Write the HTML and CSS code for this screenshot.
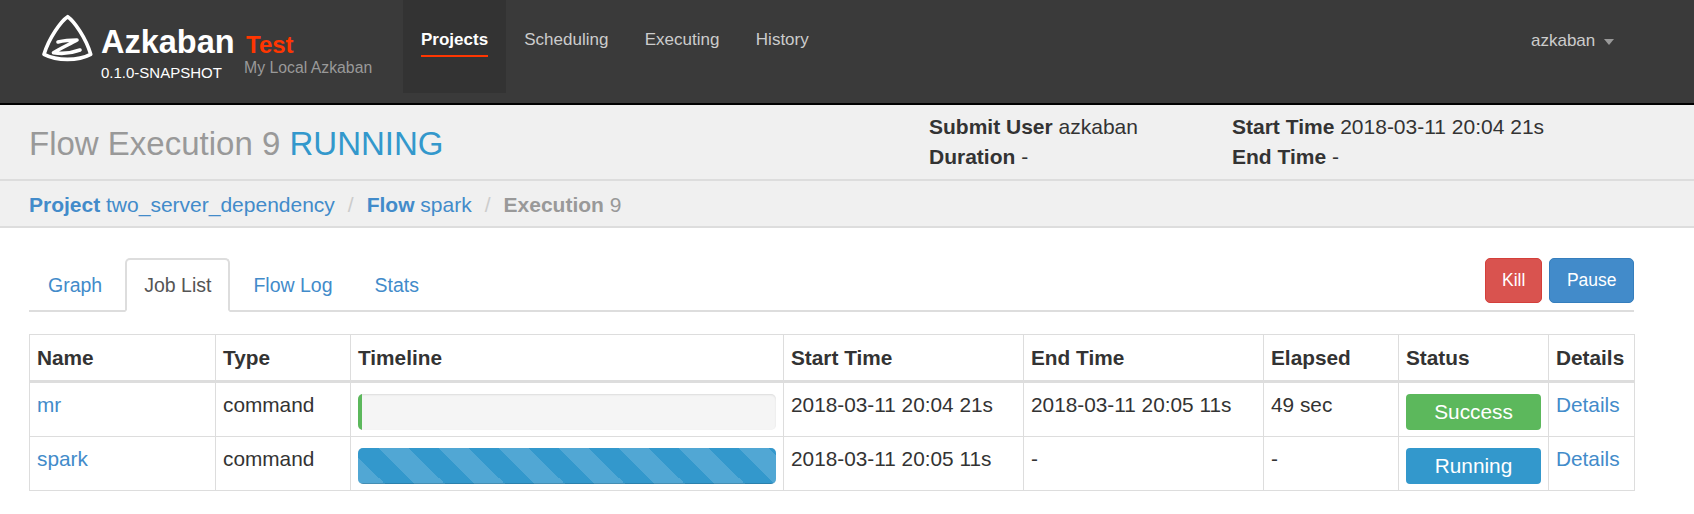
FILE: index.html
```html
<!DOCTYPE html>
<html lang="en">
<head>
  <meta charset="UTF-8" />
  <title>Azkaban - Flow Execution</title>
  <link rel="stylesheet" href="styles.css">
</head>
<body>

  <nav class="navbar">
    <div class="brand">
      <svg class="logo" viewBox="0 0 56 52" width="56" height="52">
        <path d="M27.7 4.7 C21 9 9 26 4 42.3 C17 49 38 49 50.7 42.3 C46 26 34 9 27.7 4.7 Z" fill="none" stroke="#fff" stroke-width="3.6" stroke-linejoin="round"/>
        <path d="M18 30 C24 28.5 31 28 37 28 C30 32 21 36 13.5 40.7 C22 42 32 41 40 38" fill="none" stroke="#fff" stroke-width="3.6" stroke-linejoin="round" stroke-linecap="round"/>
      </svg>
      <div class="brand-name">
        <span class="brand-title">Azkaban</span>
        <span class="brand-version">0.1.0-SNAPSHOT</span>
      </div>
      <div class="brand-env">
        <span class="env-name">Test</span>
        <span class="env-desc">My Local Azkaban</span>
      </div>
    </div>
    <ul class="nav-links">
      <li class="active"><a href="#"><span>Projects</span></a></li>
      <li><a href="#"><span>Scheduling</span></a></li>
      <li><a href="#"><span>Executing</span></a></li>
      <li><a href="#"><span>History</span></a></li>
    </ul>
    <div class="nav-user">azkaban <span class="caret"></span></div>
  </nav>

  <header class="page-header">
    <h1>Flow Execution 9 <span class="running">RUNNING</span></h1>
    <div class="summary">
      <div class="summary-col">
        <p><strong>Submit User</strong> azkaban</p>
        <p><strong>Duration</strong> -</p>
      </div>
      <div class="summary-col">
        <p><strong>Start Time</strong> 2018-03-11 20:04 21s</p>
        <p><strong>End Time</strong> -</p>
      </div>
    </div>
  </header>

  <div class="breadcrumb">
    <a href="#"><strong>Project</strong> two_server_dependency</a>
    <span class="sep">/</span>
    <a href="#"><strong>Flow</strong> spark</a>
    <span class="sep">/</span>
    <span class="current"><strong>Execution</strong> 9</span>
  </div>

  <main class="content">
    <div class="tabs">
      <ul class="tab-list">
        <li><a href="#">Graph</a></li>
        <li class="active"><a href="#">Job List</a></li>
        <li><a href="#">Flow Log</a></li>
        <li><a href="#">Stats</a></li>
      </ul>
      <div class="tab-actions">
        <button class="btn btn-kill">Kill</button>
        <button class="btn btn-pause">Pause</button>
      </div>
    </div>

    <table class="jobs">
      <thead>
        <tr>
          <th class="col-name">Name</th>
          <th class="col-type">Type</th>
          <th class="col-timeline">Timeline</th>
          <th class="col-start">Start Time</th>
          <th class="col-end">End Time</th>
          <th class="col-elapsed">Elapsed</th>
          <th class="col-status">Status</th>
          <th class="col-details">Details</th>
        </tr>
      </thead>
      <tbody>
        <tr>
          <td><a href="#">mr</a></td>
          <td>command</td>
          <td><div class="progress"><div class="bar bar-success" style="width: 1%"></div></div></td>
          <td>2018-03-11 20:04 21s</td>
          <td>2018-03-11 20:05 11s</td>
          <td>49 sec</td>
          <td><div class="status status-success">Success</div></td>
          <td><a href="#">Details</a></td>
        </tr>
        <tr>
          <td><a href="#">spark</a></td>
          <td>command</td>
          <td><div class="progress"><div class="bar bar-running" style="width: 100%"></div></div></td>
          <td>2018-03-11 20:05 11s</td>
          <td>-</td>
          <td>-</td>
          <td><div class="status status-running">Running</div></td>
          <td><a href="#">Details</a></td>
        </tr>
      </tbody>
    </table>
  </main>

</body>
</html>
```

FILE: styles.css
```css
* {
  box-sizing: border-box;
}

body {
  margin: 0;
  font-family: "Liberation Sans", Arial, sans-serif;
  font-size: 20.8px;
  line-height: 30px;
  color: #333;
  background: #fff;
}

a {
  color: #428bca;
  text-decoration: none;
}

/* top bar */
.navbar {
  height: 105px;
  display: flex;
  align-items: flex-start;
  background: #3a3a3a;
  border-bottom: 2px solid #000;
}

.brand {
  width: 403px;
  display: flex;
  padding: 12px 0 0 40px;
  flex: none;
}

.logo {
  flex: none;
  filter: blur(0.6px);
}

.brand-name {
  display: flex;
  flex-direction: column;
  width: 134px;
  margin-left: 5px;
}

.brand-title {
  font-size: 32.5px;
  font-weight: bold;
  line-height: 36px;
  margin-top: 12px;
  color: #fff;
}

.brand-version {
  font-size: 15px;
  line-height: 20px;
  margin-top: 3px;
  color: #fff;
  white-space: nowrap;
}

.brand-env {
  display: flex;
  flex-direction: column;
  margin-left: 9px;
}

.env-name {
  font-size: 24px;
  font-weight: bold;
  line-height: 28px;
  margin: 19px 0 0 2px;
  color: #ff3601;
}

.env-desc {
  font-size: 15.8px;
  line-height: 20px;
  margin-top: -1px;
  color: #999;
  white-space: nowrap;
}

.nav-links {
  list-style: none;
  display: flex;
  margin: 0;
  padding: 0;
  font-size: 17px;
  line-height: 24px;
}

.nav-links li {
  height: 93px;
}

.nav-links li.active {
  background: #333;
}

.nav-links a {
  display: block;
  padding: 28px 18.2px 0;
  color: #ccc;
}

.nav-links li.active a {
  padding: 28px 18px 0;
  color: #fff;
  font-weight: bold;
}

.nav-links span {
  display: block;
  padding-bottom: 3px;
}

.nav-links li.active span {
  border-bottom: 2px solid #ff3601;
}

.nav-user {
  margin-left: auto;
  padding: 29px 80px 0 0;
  font-size: 17px;
  line-height: 24px;
  color: #ccc;
}

.caret {
  display: inline-block;
  margin-left: 4px;
  vertical-align: middle;
  border-top: 6px solid #999;
  border-left: 5px solid transparent;
  border-right: 5px solid transparent;
}

/* page header */
.page-header {
  height: 76px;
  display: flex;
  background: #f0f0f0;
  border-bottom: 2px solid #ddd;
  padding: 0 27px 0 29px;
}

.page-header h1 {
  width: 900px;
  margin: 0;
  padding-top: 17px;
  font-size: 33px;
  font-weight: normal;
  line-height: 44px;
  color: #999;
}

.running {
  color: #3398cc;
}

.summary {
  display: flex;
  padding-top: 7px;
  font-size: 21px;
  white-space: nowrap;
}

.summary-col {
  width: 303px;
}

.summary p {
  margin: 0;
}

/* breadcrumb */
.breadcrumb {
  height: 47px;
  display: flex;
  align-items: center;
  gap: 13px;
  padding: 2px 29px 0;
  background: #f0f0f0;
  border-bottom: 2px solid #ddd;
  font-size: 21px;
  color: #999;
}

.sep {
  color: #ccc;
}

/* tabs */
.content {
  padding: 30px 60px 0 29px;
}

.tabs {
  display: flex;
  justify-content: space-between;
  height: 54px;
  border-bottom: 2px solid #ddd;
}

.tab-list {
  list-style: none;
  display: flex;
  margin: 0;
  padding: 0;
  font-size: 19.5px;
  line-height: 28px;
}

.tab-list li {
  margin-right: 4px;
}

.tab-list a {
  display: block;
  height: 54px;
  padding: 11px 17px 0;
  border: 2px solid transparent;
  border-radius: 5px 5px 0 0;
}

.tab-list .active a {
  color: #555;
  background: #fff;
  border-color: #ddd #ddd #fff;
}

.tab-actions {
  display: flex;
  gap: 7px;
  align-items: flex-start;
}

.btn {
  height: 45px;
  padding: 0 16px;
  border-radius: 5px;
  border: 1.5px solid;
  font-family: inherit;
  font-size: 17.5px;
  color: #fff;
}

.btn-kill {
  background: #d9534f;
  border-color: #d43f3a;
}

.btn-pause {
  padding: 0 16.5px;
  background: #428bca;
  border-color: #357ebd;
}

/* job table */
.jobs {
  width: 1605px;
  margin-top: 22px;
  border-collapse: collapse;
  table-layout: fixed;
}

.jobs th,
.jobs td {
  padding: 7px 7px 6px;
  border: 1px solid #ddd;
  text-align: left;
  vertical-align: top;
}

.jobs th {
  height: 47px;
  border-bottom: 3px solid #ddd;
  vertical-align: middle;
}

.jobs td {
  height: 54px;
}

.col-name { width: 186px; }
.col-type { width: 135px; }
.col-timeline { width: 433px; }
.col-start { width: 240px; }
.col-end { width: 240px; }
.col-elapsed { width: 135px; }
.col-status { width: 150px; }
.col-details { width: 86px; }

.progress {
  height: 36px;
  margin-top: 4px;
  background: #f5f5f5;
  border-radius: 5px;
  box-shadow: inset 0 1px 2px rgba(0, 0, 0, 0.1);
  overflow: hidden;
}

.bar {
  height: 100%;
  box-shadow: inset 0 -1px 0 rgba(0, 0, 0, 0.15);
}

.bar-success {
  background: #5cb85c;
}

.bar-running {
  background-color: #3398cc;
  background-image: linear-gradient(45deg, rgba(255,255,255,.15) 25%, transparent 25%, transparent 50%, rgba(255,255,255,.15) 50%, rgba(255,255,255,.15) 75%, transparent 75%, transparent);
  background-size: 60px 60px;
  background-position: 21px 0;
}

.status {
  height: 36px;
  margin-top: 4px;
  border-radius: 4px;
  text-align: center;
  line-height: 35px;
  color: #fff;
}

.status-success {
  background: #5cb85c;
}

.status-running {
  background: #3398cc;
}
```
